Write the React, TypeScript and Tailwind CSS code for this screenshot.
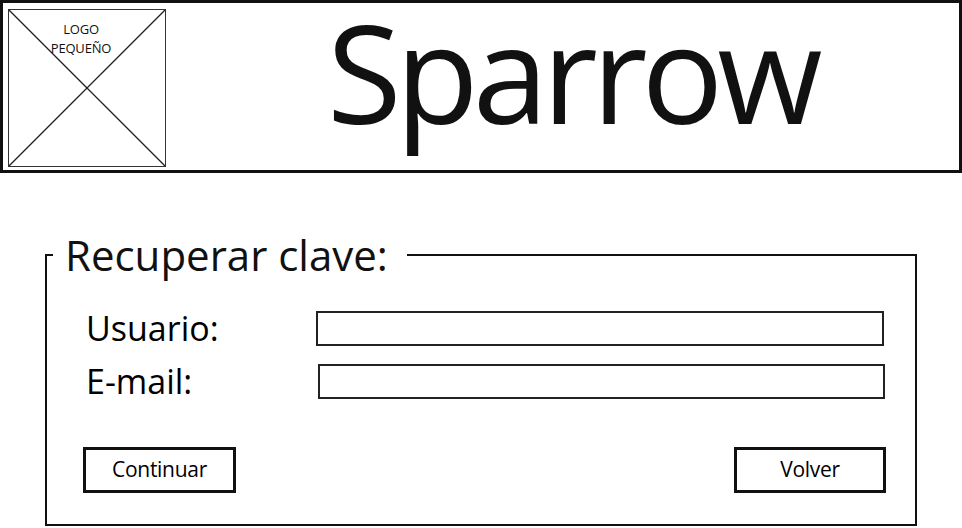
import React from "react";

const font = { fontFamily: '"Open Sans", "Noto Sans", sans-serif' };

export default function App() {
  return (
    <div className="w-[962px] h-[528px] bg-white overflow-hidden text-black" style={font}>
      {/* Header */}
      <div className="w-[962px] h-[173px] border-[3px] border-[#111] flex items-start">
        <div className="relative ml-[5px] mt-[6px] w-[158px] h-[158px] border-[1.5px] border-[#333] shrink-0">
          <svg className="absolute inset-0 w-full h-full" viewBox="0 0 155 155" preserveAspectRatio="none">
            <line x1="0" y1="0" x2="155" y2="155" stroke="#222" strokeWidth="1.3" />
            <line x1="155" y1="0" x2="0" y2="155" stroke="#222" strokeWidth="1.3" />
          </svg>
          <div className="relative pt-[10px] pr-[12px] text-center text-[13px] leading-[19px] tracking-[-0.2px] text-[#111]">
            <div>LOGO</div>
            <div>PEQUEÑO</div>
          </div>
        </div>
        <div className="ml-[161px] mt-[1px] pr-[10px] text-[136px] leading-none tracking-[-6px] text-[#111] whitespace-nowrap">
          Sparrow
        </div>
      </div>

      {/* Recover form */}
      <fieldset className="ml-[45px] mt-[58px] w-[872px] h-[295px] border-2 border-[#111] px-0 pt-[32px] pb-0 m-0">
        <legend className="ml-[6px] pl-[12px] pr-[19px] text-[42px] leading-[48px] text-[#111]">
          Recuperar clave:
        </legend>
        <div className="flex flex-col gap-[18px]">
          <div className="flex items-center h-[35px]">
            <div className="ml-[39px] w-[230px] text-[34px] leading-[35px]">Usuario:</div>
            <div className="w-[568px] h-[35px] border-2 border-[#222]" />
          </div>
          <div className="flex items-center h-[35px]">
            <div className="ml-[39px] w-[232px] text-[34px] leading-[35px]">E-mail:</div>
            <div className="w-[567px] h-[35px] border-2 border-[#222]" />
          </div>
        </div>
        <div className="flex justify-between mt-[48px] ml-[36px] mr-[29px]">
          <div className="w-[153px] h-[46px] border-[3px] border-[#111] flex items-center justify-center text-[21px] tracking-[-0.3px]">
            Continuar
          </div>
          <div className="w-[152px] h-[46px] border-[3px] border-[#111] flex items-center justify-center text-[21px] tracking-[-0.3px]">
            Volver
          </div>
        </div>
      </fieldset>
    </div>
  );
}
